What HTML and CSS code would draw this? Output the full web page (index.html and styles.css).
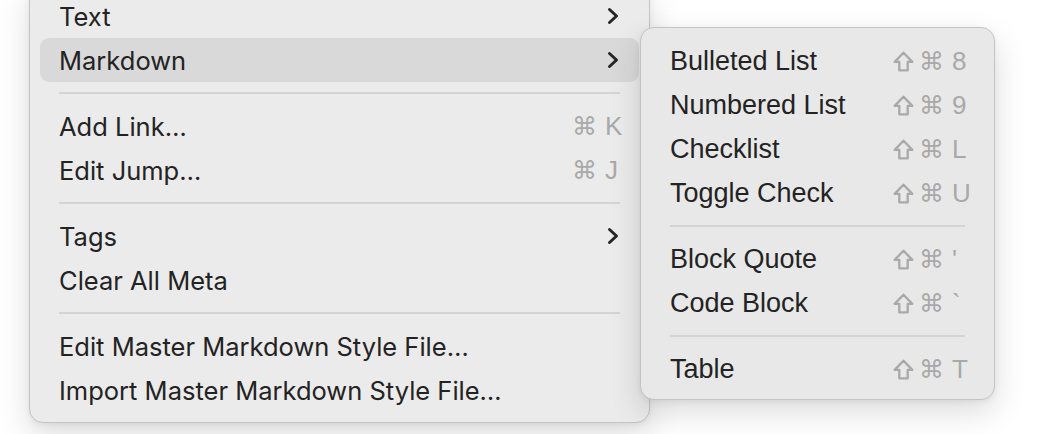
FILE: index.html
```html
<!DOCTYPE html>
<html lang="en">
<head>
    <meta charset="UTF-8">
    <meta name="viewport" content="width=device-width, initial-scale=1.0">
    <title>Context menu</title>
    <link rel="stylesheet" href="styles.css">
</head>
<body>
    <div class="stage">
        <div class="menu main-menu">
            <div class="item">
                <span class="label">Text</span>
                <svg class="chevron" viewBox="0 0 12 18"><path d="M2.5 2.5 L9.5 9 L2.5 15.5"/></svg>
            </div>
            <div class="item active">
                <span class="label">Markdown</span>
                <svg class="chevron" viewBox="0 0 12 18"><path d="M2.5 2.5 L9.5 9 L2.5 15.5"/></svg>
            </div>
            <div class="separator"></div>
            <div class="item">
                <span class="label">Add Link…</span>
                <span class="keys"><span class="mod">⌘</span><span class="key">K</span></span>
            </div>
            <div class="item">
                <span class="label">Edit Jump…</span>
                <span class="keys"><span class="mod">⌘</span><span class="key">J</span></span>
            </div>
            <div class="separator"></div>
            <div class="item">
                <span class="label">Tags</span>
                <svg class="chevron" viewBox="0 0 12 18"><path d="M2.5 2.5 L9.5 9 L2.5 15.5"/></svg>
            </div>
            <div class="item">
                <span class="label">Clear All Meta</span>
            </div>
            <div class="separator"></div>
            <div class="item">
                <span class="label">Edit Master Markdown Style File…</span>
            </div>
            <div class="item">
                <span class="label">Import Master Markdown Style File…</span>
            </div>
        </div>

        <div class="menu sub-menu">
            <div class="item">
                <span class="label">Bulleted List</span>
                <span class="keys"><svg class="shift" viewBox="0 0 20 20"><path d="M10 1.6 L18.4 10.4 H14 V18.4 H6 V10.4 H1.6 Z"/></svg><span class="mod">⌘</span><span class="key">8</span></span>
            </div>
            <div class="item">
                <span class="label">Numbered List</span>
                <span class="keys"><svg class="shift" viewBox="0 0 20 20"><path d="M10 1.6 L18.4 10.4 H14 V18.4 H6 V10.4 H1.6 Z"/></svg><span class="mod">⌘</span><span class="key">9</span></span>
            </div>
            <div class="item">
                <span class="label">Checklist</span>
                <span class="keys"><svg class="shift" viewBox="0 0 20 20"><path d="M10 1.6 L18.4 10.4 H14 V18.4 H6 V10.4 H1.6 Z"/></svg><span class="mod">⌘</span><span class="key">L</span></span>
            </div>
            <div class="item">
                <span class="label">Toggle Check</span>
                <span class="keys"><svg class="shift" viewBox="0 0 20 20"><path d="M10 1.6 L18.4 10.4 H14 V18.4 H6 V10.4 H1.6 Z"/></svg><span class="mod">⌘</span><span class="key">U</span></span>
            </div>
            <div class="separator"></div>
            <div class="item">
                <span class="label">Block Quote</span>
                <span class="keys"><svg class="shift" viewBox="0 0 20 20"><path d="M10 1.6 L18.4 10.4 H14 V18.4 H6 V10.4 H1.6 Z"/></svg><span class="mod">⌘</span><span class="key">'</span></span>
            </div>
            <div class="item">
                <span class="label">Code Block</span>
                <span class="keys"><svg class="shift" viewBox="0 0 20 20"><path d="M10 1.6 L18.4 10.4 H14 V18.4 H6 V10.4 H1.6 Z"/></svg><span class="mod">⌘</span><span class="key">`</span></span>
            </div>
            <div class="separator"></div>
            <div class="item">
                <span class="label">Table</span>
                <span class="keys"><svg class="shift" viewBox="0 0 20 20"><path d="M10 1.6 L18.4 10.4 H14 V18.4 H6 V10.4 H1.6 Z"/></svg><span class="mod">⌘</span><span class="key">T</span></span>
            </div>
        </div>
    </div>
</body>
</html>
```

FILE: styles.css
```css
body {
    margin: 0;
    background-color: #fff;
    overflow: hidden;
}
.stage {
    display: flow-root;
    position: relative;
    width: 1044px;
    height: 434px;
}
.menu {
    box-sizing: border-box;
    display: flex;
    flex-direction: column;
    padding: 10px 10px 8px;
    background-color: #ebebeb;
    border: 1px solid #c4c4c4;
    border-radius: 14px;
    box-shadow: 0 12px 32px rgba(0, 0, 0, 0.14), 0 2px 6px rgba(0, 0, 0, 0.06);
    color: #232323;
}
.main-menu {
    width: 621px;
    margin-left: 29px;
    margin-top: -17px;
    padding-bottom: 10px;
    font-family: "Inter", "Noto Sans", sans-serif;
    font-size: 25.5px;
}
.sub-menu {
    position: absolute;
    left: 640px;
    top: 27px;
    width: 355px;
    padding-top: 11px;
    background-color: #e8e8e8;
    font-family: "Liberation Sans", Arial, sans-serif;
    font-size: 27px;
}
.item {
    display: flex;
    align-items: center;
    justify-content: space-between;
    height: 44px;
    padding: 0 18px 0 19px;
    border-radius: 9px;
}
.sub-menu .item {
    padding-right: 16px;
}
.item.active {
    background-color: #d9d9d9;
}
.label {
    white-space: nowrap;
}
.chevron {
    width: 12px;
    height: 18px;
    margin-right: 2px;
    fill: none;
    stroke: #262626;
    stroke-width: 3;
    stroke-linecap: round;
    stroke-linejoin: round;
}
.separator {
    height: 2px;
    margin: 10px 19px;
    background-color: #d4d4d4;
}
.keys {
    display: flex;
    align-items: center;
    color: #a9a9a9;
    font-family: "Liberation Sans", Arial, sans-serif;
    font-size: 26px;
}
.mod {
    font-family: "DejaVu Sans", sans-serif;
    font-size: 25px;
    margin-right: 8px;
}
.key {
    width: 16px;
}
.shift {
    width: 21px;
    height: 21px;
    margin-right: 5px;
    fill: none;
    stroke: #a9a9a9;
    stroke-width: 2.2;
    stroke-linejoin: round;
}
```
